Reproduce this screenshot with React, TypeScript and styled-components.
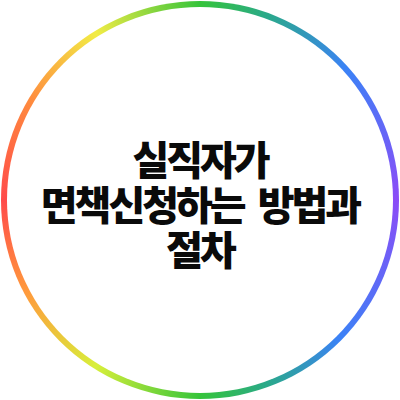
import React from 'react';
import styled, { createGlobalStyle } from 'styled-components';

const GlobalStyle = createGlobalStyle`
  html, body {
    margin: 0;
    padding: 0;
    background: #ffffff;
  }
  body {
    width: 400px;
    height: 400px;
    overflow: hidden;
  }
`;

const Page = styled.div`
  width: 400px;
  height: 400px;
  display: flex;
  align-items: center;
  justify-content: center;
  background: #ffffff;
`;

const Ring = styled.div`
  width: 398px;
  height: 398px;
  box-sizing: border-box;
  padding: 6px;
  border-radius: 50%;
  background: conic-gradient(
    #35c43a 0deg,
    #2aa98a 20deg,
    #3b82f6 48deg,
    #8b4cf7 90deg,
    #3b82f6 135deg,
    #2aa98a 160deg,
    #35c43a 180deg,
    #d8ef3a 212deg,
    #ff9a3c 242deg,
    #ff4a4a 270deg,
    #ff8a3e 300deg,
    #f2ec45 328deg,
    #35c43a 360deg
  );
`;

const Inner = styled.div`
  width: 100%;
  height: 100%;
  border-radius: 50%;
  background: #ffffff;
  display: flex;
  align-items: center;
  justify-content: center;
`;

const Title = styled.h1`
  margin: 0;
  padding-top: 6px;
  font-family: "Noto Sans CJK KR", "Noto Sans", sans-serif;
  font-weight: 900;
  font-size: 40px;
  line-height: 45px;
  letter-spacing: -3px;
  word-spacing: 8px;
  color: #0a0a0a;
  text-align: center;
`;

export default function App() {
  return (
    <>
      <GlobalStyle />
      <Page>
        <Ring>
          <Inner>
            <Title>
              실직자가
              <br />
              면책신청하는 방법과
              <br />
              절차
            </Title>
          </Inner>
        </Ring>
      </Page>
    </>
  );
}
